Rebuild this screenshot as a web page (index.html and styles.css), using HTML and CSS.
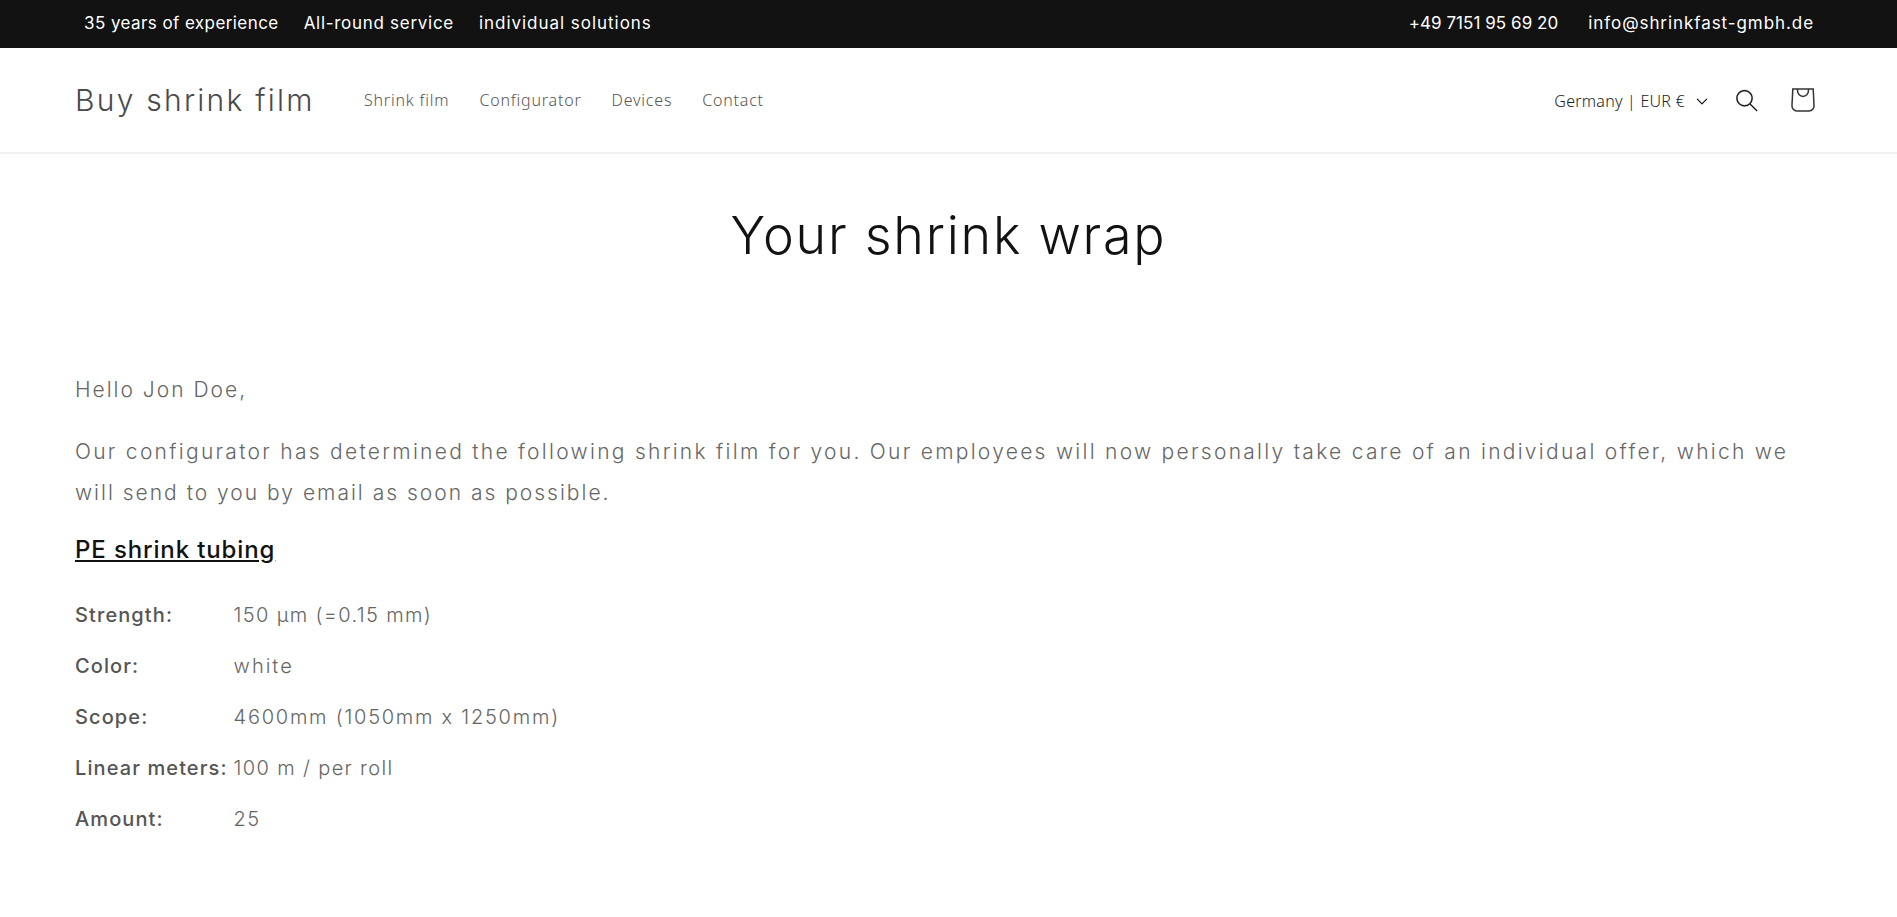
FILE: index.html
```html
<!DOCTYPE html>
<html lang="en">
<head>
<meta charset="utf-8">
<title>Your shrink wrap</title>
<link rel="stylesheet" href="styles.css">
</head>
<body>
<div class="topbar">
  <div class="topbar-left">
    <span class="usp usp-1">35 years of experience</span>
    <span class="usp usp-2">All-round service</span>
    <span class="usp usp-3">individual solutions</span>
  </div>
  <div class="topbar-right">
    <span class="usp usp-4">+49 7151 95 69 20</span>
    <span class="usp usp-5">info@shrinkfast-gmbh.de</span>
  </div>
</div>
<header class="header">
  <a class="logo">Buy shrink film</a>
  <nav class="nav">
    <a>Shrink film</a>
    <a>Configurator</a>
    <a>Devices</a>
    <a>Contact</a>
  </nav>
  <div class="tools">
    <button class="locale">Germany | EUR €
      <svg class="caret" viewBox="0 0 10 6" aria-hidden="true"><path fill-rule="evenodd" clip-rule="evenodd" d="M9.354.646a.5.5 0 00-.708 0L5 4.293 1.354.646a.5.5 0 00-.708.708l4 4a.5.5 0 00.708 0l4-4a.5.5 0 000-.708z"/></svg>
    </button>
    <svg class="search" viewBox="0 0 18 19" aria-hidden="true"><path fill-rule="evenodd" clip-rule="evenodd" d="M11.03 11.68A5.784 5.784 0 112.85 3.5a5.784 5.784 0 018.18 8.18zm.26 1.12a6.78 6.78 0 11.72-.7l5.4 5.4a.5.5 0 11-.71.71l-5.41-5.41z"/></svg>
    <svg class="cart" viewBox="0 0 24 24" aria-hidden="true"><path d="M1.8 1H22.2L23 17.5A5 5 0 0 1 18 23H6A5 5 0 0 1 1 17.5ZM6.6 1V3A5.4 5.4 0 0 0 17.4 3V1"/></svg>
  </div>
</header>
<main class="main">
  <h1 class="title">Your shrink wrap</h1>
  <p class="hello">Hello Jon Doe,</p>
  <p class="intro">Our configurator has determined the following shrink film for you. Our employees will now personally take care of an individual offer, which we <span class="tight">will send to you by email as soon as possible.</span></p>
  <h2 class="product">PE shrink tubing</h2>
  <table class="specs">
    <tr><th>Strength:</th><td>150 µm (=0.15 mm)</td></tr>
    <tr><th>Color:</th><td class="wider">white</td></tr>
    <tr><th>Scope:</th><td class="wide">4600mm (1050mm x 1250mm)</td></tr>
    <tr><th>Linear meters:</th><td>100 m / per roll</td></tr>
    <tr><th>Amount:</th><td>25</td></tr>
  </table>
</main>
</body>
</html>
```
FILE: styles.css
```css
* { box-sizing: border-box; }
html, body { margin: 0; padding: 0; background: #fff; }
body { font-family: "Inter", "Liberation Sans", sans-serif; color: #121212; height: 917px; overflow: hidden; }
.topbar { height: 48px; background: #121212; color: #fff; display: flex; justify-content: space-between; align-items: center; padding: 0 83px 3px 84px; font-size: 17px; }
.topbar-left, .topbar-right { display: flex; gap: 25px; }
.topbar-right { gap: 30px; }
.usp-1 { letter-spacing: .42px; }
.usp-2 { letter-spacing: .71px; }
.usp-3 { letter-spacing: .97px; }
.usp-4 { letter-spacing: .05px; }
.usp-5 { letter-spacing: .93px; }
.header { height: 106px; border-bottom: 2px solid #f0f0f0; display: flex; align-items: center; padding: 0 75px; }
.logo { font-size: 30px; font-weight: 300; color: #4a4a4a; letter-spacing: 2.25px; width: 289px; }
.nav { display: flex; gap: 30px; font-family: "Noto Sans", sans-serif; font-weight: 300; font-size: 16px; letter-spacing: .8px; color: #555; }
.tools { margin-left: auto; display: flex; align-items: center; }
.locale { display: flex; align-items: center; gap: 11px; border: 0; padding: 2px 0 0; background: none; font-family: "Noto Sans", sans-serif; font-weight: 300; font-size: 16px; letter-spacing: .25px; color: #222; }
.caret { width: 12px; height: 7px; display: block; fill: #121212; }
.search { width: 22px; height: 23px; margin-left: 28px; fill: #121212; stroke: #121212; stroke-width: .2; display: block; }
.cart { width: 24px; height: 24px; margin-left: 33px; margin-right: 7px; fill: none; stroke: #333; stroke-width: 1.5; display: block; }
.main { padding: 0 75px; }
.title { margin: 52px 0 0; height: 60px; text-align: center; font-size: 52px; line-height: 60px; font-weight: 300; color: #121212; letter-spacing: 1.75px; }
.hello, .intro { color: #666; font-size: 21px; font-weight: 300; letter-spacing: 2.28px; line-height: 41px; }
.hello { margin: 103px 0 0; letter-spacing: 2px; }
.intro { margin: 21px 0 0; }
.tight { letter-spacing: 2px; }
.product { margin: 21px 0 0; font-size: 24px; line-height: 32px; font-weight: 500; color: #121212; letter-spacing: .87px; text-decoration: underline; }
.specs { margin-top: 23px; border-collapse: collapse; font-size: 20px; color: #666; }
.specs th, .specs td { height: 51px; padding: 0; text-align: left; }
.specs th { font-weight: 500; color: #555; padding-right: 6px; letter-spacing: 1.1px; }
.specs td { font-weight: 300; letter-spacing: 1.35px; }
.specs .wide { letter-spacing: 1.75px; }
.specs .wider { letter-spacing: 2px; }
```
